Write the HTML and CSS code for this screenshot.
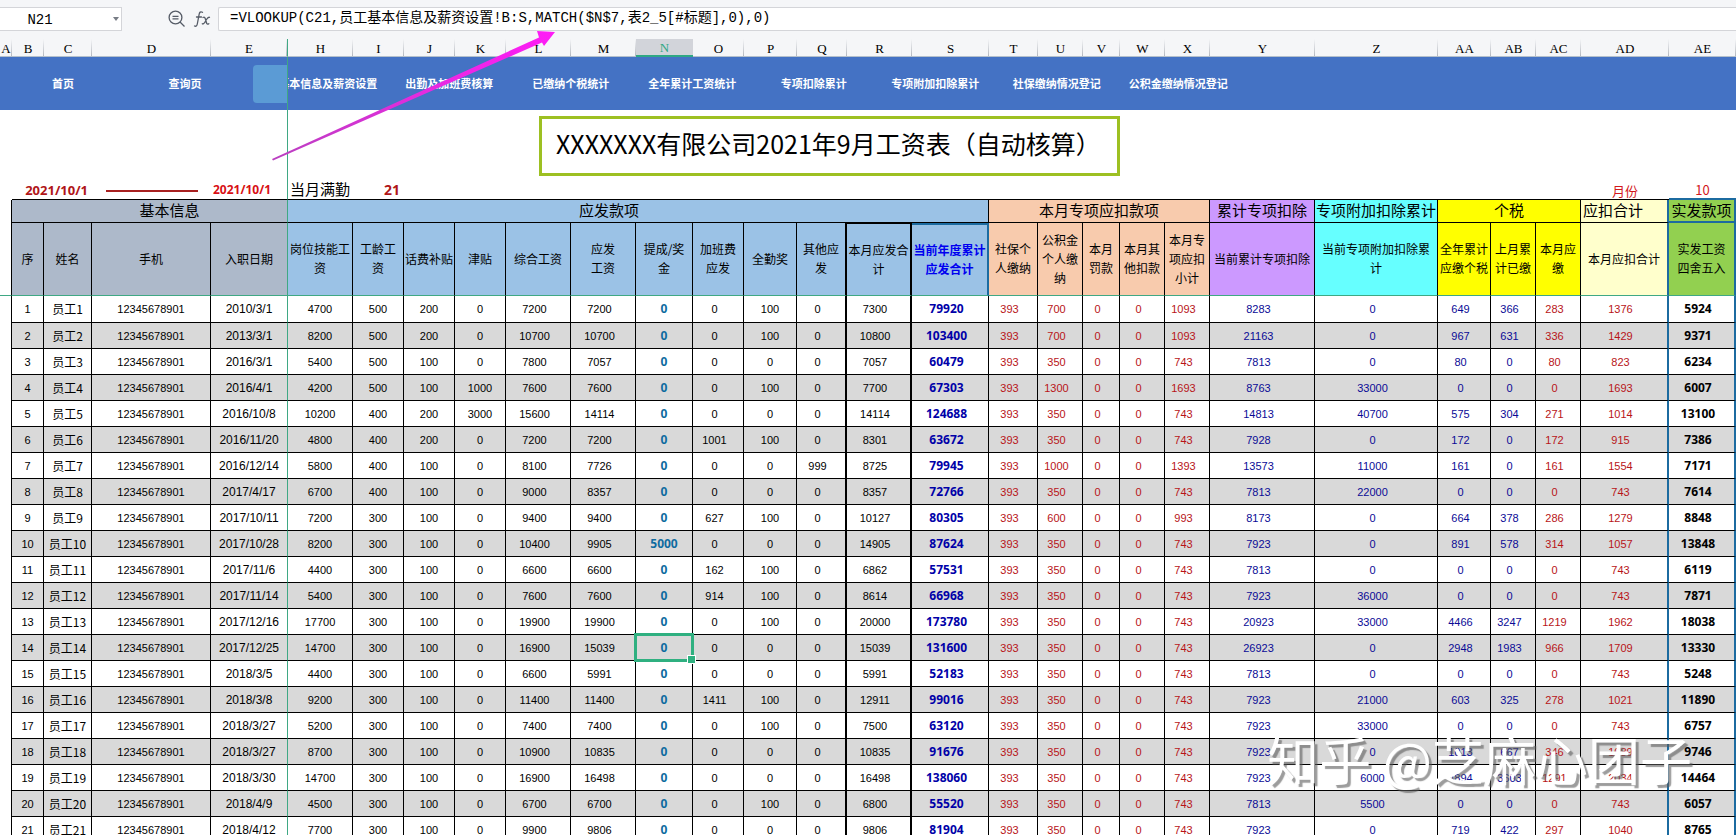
FILE: index.html
```html
<!DOCTYPE html>
<html lang="zh-CN">
<head>
<meta charset="utf-8">
<title>工资表</title>
<link rel="stylesheet" href="styles.css">
</head>
<body>
<header class="toolbar">
  <div class="namebox">
    <input class="namebox-input" aria-label="名称框" value="N21">
    <button class="namebox-drop" aria-label="展开名称列表"></button>
  </div>
  <div class="tools">
    <button class="tool" aria-label="查找">
      <svg width="18" height="18" viewBox="0 0 18 18" fill="none" stroke="#555b66" stroke-width="1.3"><circle cx="7.500" cy="7.500" r="6.400"/><path d="M4.500 6.300h6M4.500 8.800h6M12 12l4.500 4.500"/></svg>
    </button>
    <button class="tool" aria-label="插入函数">
      <svg width="18" height="18" viewBox="0 0 18 18" fill="none" stroke="#555b66" stroke-width="1.3" stroke-linecap="round"><path d="M9.5 2.3c-2-1.200-3 0-3.400 2.200L4.300 14c-.4 2-1.300 2.700-2.800 2M3.500 7h5M10 7.500c1.500-.8 2 0 2.400 1.500l1 3.500c.4 1.600 1.200 2 2.400 1.200M16.500 7.300c-1.200-.4-2 .5-3 2.200l-1.800 3c-.8 1.300-1.500 1.800-2.400 1.300"/></svg>
    </button>
  </div>
  <input class="formula" aria-label="编辑栏" value="=VLOOKUP(C21,员工基本信息及薪资设置!B:S,MATCH($N$7,表2_5[#标题],0),0)">
</header>
<main class="sheet">
  <table class="grid">
    <colgroup id="cols"></colgroup>
    <thead>
      <tr class="letters" id="letters"></tr>
      <tr class="nav-row">
        <td class="pane-edge" colspan="5">
          <nav class="nav nav-fixed"><a href="#">首页</a><a href="#">查询页</a><span class="nav-active"></span></nav>
        </td>
        <td colspan="24">
          <div class="nav-clip">
          <nav class="nav nav-scroll">
            <a href="#">基本信息及薪资设置</a><a href="#">出勤及加班费核算</a><a href="#">已缴纳个税统计</a><a href="#">全年累计工资统计</a><a href="#">专项扣除累计</a><a href="#">专项附加扣除累计</a><a href="#">社保缴纳情况登记</a><a href="#">公积金缴纳情况登记</a>
          </nav>
          </div>
        </td>
      </tr>
      <tr class="title-row">
        <td class="pane-edge" colspan="5"></td>
        <td colspan="24"><h1 class="title">XXXXXXX有限公司2021年9月工资表（自动核算）</h1></td>
      </tr>
      <tr class="info-row">
        <td class="blank"></td>
        <td class="date-from" colspan="2">2021/10/1</td>
        <td class="dash"><span class="dash-line"></span></td>
        <td class="date-to pane-edge">2021/10/1</td>
        <td class="full-label">当月满勤</td>
        <td class="full-days">21</td>
        <td colspan="20"></td>
        <td class="month">月份</td>
        <td class="month edge-blue">10</td>
      </tr>
      <tr class="group-row">
        <td class="gutter"></td>
        <th class="slate pane-edge group-basic" colspan="4">基本信息</th>
        <th class="sky group-pay" colspan="12">应发款项</th>
        <th class="peach" colspan="5">本月专项应扣款项</th>
        <th class="purple">累计专项扣除</th>
        <th class="cyan">专项附加扣除累计</th>
        <th class="yellow" colspan="3">个税</th>
        <th class="cream c-AD group-left">应扣合计</th>
        <th class="green c-AE">实发款项</th>
      </tr>
      <tr class="head-row">
        <td class="gutter"></td>
        <th class="slate">序</th><th class="slate">姓名</th><th class="slate">手机</th><th class="slate pane-edge">入职日期</th>
        <th class="sky">岗位技能工<br>资</th><th class="sky">工龄工<br>资</th><th class="sky">话费补贴</th><th class="sky">津贴</th><th class="sky">综合工资</th><th class="sky">应发<br>工资</th><th class="sky">提成/奖<br>金</th><th class="sky">加班费<br>应发</th><th class="sky">全勤奖</th><th class="sky c-Q">其他应<br>发</th><th class="sky c-R month-total">本月应发合<br>计</th><th class="sky year-total">当前年度累计<br>应发合计</th>
        <th class="peach">社保个<br>人缴纳</th><th class="peach">公积金<br>个人缴<br>纳</th><th class="peach">本月<br>罚款</th><th class="peach">本月其<br>他扣款</th><th class="peach">本月专<br>项应扣<br>小计</th>
        <th class="purple">当前累计专项扣除</th><th class="cyan">当前专项附加扣除累<br>计</th>
        <th class="yellow">全年累计<br>应缴个税</th><th class="yellow">上月累<br>计已缴</th><th class="yellow">本月应<br>缴</th>
        <th class="cream c-AD">本月应扣合计</th><th class="green c-AE">实发工资<br>四舍五入</th>
      </tr>
    </thead>
    <tbody id="rows"></tbody>
  </table>
</main>
<svg class="arrow" width="290" height="134" viewBox="0 0 290 134" aria-hidden="true">
  <defs><linearGradient id="ink" x1="0" y1="1" x2="1" y2="0"><stop offset="0" stop-color="#b93fc0"/><stop offset=".55" stop-color="#e62ae0"/><stop offset="1" stop-color="#ff1cf7"/></linearGradient></defs>
  <path fill="url(#ink)" d="M2 131L269 9.500L267 3L285 4L274 18L272 14.500L3 132.500Z"/>
</svg>
<div class="watermark">知乎 @芝麻心团子</div>
<script src="sheet.js"></script>
</body>
</html>
```
FILE: styles.css
```css
* { box-sizing: border-box; }

body {
  margin: 0;
  height: 100vh;
  overflow: hidden;
  position: relative;
  background: #fff;
  color: #000;
  font-family: "Liberation Sans", "Noto Sans CJK SC", sans-serif;
}

/* Toolbar */
.toolbar {
  display: flex;
  align-items: center;
  height: 39px;
  padding: 7px 0 8px;
  background: #f5f6f8;
}
.namebox {
  display: flex;
  align-items: center;
  width: 122px;
  height: 24px;
  background: #fff;
  border: 1px solid #d4d5d9;
  border-left: 0;
}
.namebox-input {
  width: 80px;
  min-width: 0;
  border: 0;
  padding: 2px 0 0;
  background: transparent;
  text-align: center;
  font: 14px "Liberation Mono", monospace;
  outline: 0;
}
.namebox-drop {
  margin-left: auto;
  margin-right: 2px;
  padding: 0;
  background: none;
  border: 3px solid transparent;
  border-top: 4px solid #777c85;
  border-bottom: 0;
}
.tools {
  display: flex;
  gap: 7px;
  padding: 0 7px 0 46px;
}
.tool {
  width: 18px;
  height: 18px;
  padding: 0;
  border: 0;
  background: none;
}
.formula {
  flex: 1;
  min-width: 0;
  height: 24px;
  border: 1px solid #d4d5d9;
  border-right: 0;
  border-radius: 2px 0 0 2px;
  padding: 0 0 6px 11px;
  background: #fff;
  font: 14px "Liberation Mono", "Noto Sans CJK SC", monospace;
  outline: 0;
}

/* Grid */
.grid {
  width: 100%;
  table-layout: fixed;
  border-collapse: separate;
  border-spacing: 0;
}
.grid th, .grid td {
  padding: 0;
  font-weight: 400;
  white-space: nowrap;
  text-align: center;
  vertical-align: middle;
}
.letters th {
  height: 18px;
  padding-top: 2px;
  line-height: 14px;
  background: linear-gradient(#f5f6f8, #b4b8bf) right / 1px 100% no-repeat #f5f6f8;
  border-bottom: 1px solid #b4c0cc;
  font-family: "Liberation Serif", serif;
  font-size: 13px;
}
.letters .picked {
  background: #d2d4da;
  border-bottom: 2px solid #2fa884;
  color: #2fa884;
}
.grid .pane-edge { border-right: 1px solid #3fa884; }

/* Navigation band */
.nav-row td { height: 53px; background: #4472c4; }
.nav { display: flex; align-items: center; height: 53px; }
.nav a {
  padding-bottom: 2px;
  color: #fff;
  font: bold 11px "Noto Sans CJK SC", sans-serif;
  text-decoration: none;
  text-align: center;
}
.nav-fixed { padding-left: 2px; }
.nav-fixed a { width: 122px; }
.nav-active {
  flex: 1;
  height: 38px;
  margin-left: 7px;
  border-radius: 4px 0 0 4px;
  background: #5b9bd5;
}
.nav-clip { overflow: hidden; }
.nav-scroll {
  display: grid;
  grid-template-columns: repeat(8, 1fr);
  width: 972px;
  margin-left: -21px;
}

/* Title and period */
.title-row td { height: 71px; }
.title {
  width: 581px;
  margin: 0 0 0 251px;
  padding: 0 0 6px 14px;
  border: 3px solid #9dc022;
  text-align: left;
  font: 25px/48px "Noto Sans CJK SC", sans-serif;
}
.info-row td {
  height: 19px;
  border-bottom: 1px solid #000;
  line-height: 18px;
}
.info-row .blank { border-bottom: 0; }
.info-row .date-from, .info-row .date-to, .info-row .full-days {
  color: #b01518;
  font: bold 12px/18px "Noto Sans", sans-serif;
}
.info-row .date-from { text-align: right; padding-right: 4px; font-size: 13px; }
.info-row .date-to { color: #d80f14; padding-right: 14px; }
.info-row .full-days { text-align: right; padding-right: 4px; font-size: 14px; }
.info-row .full-label { text-align: left; padding-left: 2px; font-size: 15px; }
.info-row .month { color: #d2181b; font: 13px/17px "Noto Sans CJK SC", sans-serif; }
.info-row .edge-blue { border-bottom: 2px solid #1c6ba0; }
.dash-line { display: inline-block; width: 92px; height: 2px; background: #a82020; vertical-align: middle; }

/* Headings */
.group-row th, .group-row td { height: 23px; }
.head-row th, .head-row td { height: 73px; }
.group-row th, .head-row th {
  border-right: 1px solid #000;
  border-bottom: 1px solid #000;
  font-family: "Noto Sans CJK SC", sans-serif;
}
.group-row th { font-size: 15px; line-height: 18px; padding-bottom: 2px; }
.group-row .group-basic { padding-left: 40px; }
.group-row .group-pay { padding-right: 58px; }
.group-row .group-left { text-align: left; padding-left: 2px; }
.head-row th { font-size: 12px; line-height: 19px; padding-bottom: 2px; }
.head-row th, .head-row td { border-bottom: 1px solid #3fa884; }
.slate { background: #adb9ca; }
.sky { background: #9bc2e6; }
.peach { background: #f8cbad; }
.purple { background: #cc99ff; }
.cyan { background: #66ffff; }
.yellow { background: #ffff00; }
.cream { background: #ffffcc; }
.green { background: #92d050; }
.grid .gutter { border-right: 1px solid #000; }
.head-row .month-total { border-top: 1px solid #000; }
.head-row .year-total {
  border-top: 2px solid #1c6ba0;
  border-right: 2px solid #1c6ba0;
  color: #0000f0;
  font-weight: 700;
}
.grid .c-Q, .grid .c-R { border-right: 2px solid #000; }
.grid .c-AD, .grid .c-AE { border-right: 2px solid #1c6ba0; }
.group-row .c-AE { border-bottom: 2px solid #1c6ba0; }

/* Body rows */
.row td {
  height: 26px;
  border-right: 1px solid #000;
  border-bottom: 1px solid #000;
  font-size: 11px;
  line-height: 16px;
}
.row:first-child td { height: 27px; }
.row td.gutter { border-bottom: 0; }
.row:nth-child(even) td:not(.gutter) { background: #d9d9d9; }
.row .c-C { font: 12px/16px "Noto Sans CJK SC", sans-serif; }
.row .c-E { font-size: 12px; border-right-color: #3fa884; }
.row .padded { padding-right: 7px; }
.row .c-N, .row .c-S, .row .c-AE { font: bold 12px/16px "Noto Sans", sans-serif; }
.row .c-N { color: #0f6ba0; }
.row .c-S { color: #0000a8; }
.row .red { color: #b81418; }
.row .navy { color: #0a0a96; }
.row .selected { position: relative; }
.selected::before {
  content: "";
  position: absolute;
  inset: -2px;
  border: 3px solid #2fb080;
  z-index: 1;
}
.selected::after {
  content: "";
  position: absolute;
  right: -4px;
  bottom: -4px;
  width: 7px;
  height: 7px;
  background: #2fb080;
  border: 1px solid #fff;
  z-index: 2;
}

/* Overlays */
.arrow { position: absolute; left: 270px; top: 28px; pointer-events: none; }
.watermark {
  position: absolute;
  right: 44px;
  bottom: 48px;
  color: #fff;
  font: 52px/56px "Noto Sans CJK SC", sans-serif;
  text-shadow: 3px 3px 1px rgba(90, 90, 90, .6);
  white-space: nowrap;
  pointer-events: none;
  z-index: 3;
}
```
FILE: sheet.js
```js
const columns = [
  ["A", 12], ["B", 32], ["C", 48], ["D", 119], ["E", 77], ["H", 65], ["I", 51], ["J", 51],
  ["K", 51], ["L", 65], ["M", 65], ["N", 57], ["O", 51], ["P", 53], ["Q", 50], ["R", 65],
  ["S", 77], ["T", 49], ["U", 45], ["V", 37], ["W", 45], ["X", 45], ["Y", 105], ["Z", 123],
  ["AA", 53], ["AB", 45], ["AC", 45], ["AD", 88], ["AE", 67]
];
const padded = new Set(["L", "M", "O", "Q", "R", "S", "T", "U", "V", "W", "X", "Y", "Z", "AA", "AB", "AC", "AD", "AE"]);
const red = new Set(["T", "U", "V", "W", "X", "AC", "AD"]);
const navy = new Set(["Y", "Z", "AA", "AB"]);

// Hire date, then the values of columns H to AE.
const staff = [
  "2010/3/1 4700 500 200 0 7200 7200 0 0 100 0 7300 79920 393 700 0 0 1093 8283 0 649 366 283 1376 5924",
  "2013/3/1 8200 500 200 0 10700 10700 0 0 100 0 10800 103400 393 700 0 0 1093 21163 0 967 631 336 1429 9371",
  "2016/3/1 5400 500 100 0 7800 7057 0 0 0 0 7057 60479 393 350 0 0 743 7813 0 80 0 80 823 6234",
  "2016/4/1 4200 500 100 1000 7600 7600 0 0 100 0 7700 67303 393 1300 0 0 1693 8763 33000 0 0 0 1693 6007",
  "2016/10/8 10200 400 200 3000 15600 14114 0 0 0 0 14114 124688 393 350 0 0 743 14813 40700 575 304 271 1014 13100",
  "2016/11/20 4800 400 200 0 7200 7200 0 1001 100 0 8301 63672 393 350 0 0 743 7928 0 172 0 172 915 7386",
  "2016/12/14 5800 400 100 0 8100 7726 0 0 0 999 8725 79945 393 1000 0 0 1393 13573 11000 161 0 161 1554 7171",
  "2017/4/17 6700 400 100 0 9000 8357 0 0 0 0 8357 72766 393 350 0 0 743 7813 22000 0 0 0 743 7614",
  "2017/10/11 7200 300 100 0 9400 9400 0 627 100 0 10127 80305 393 600 0 0 993 8173 0 664 378 286 1279 8848",
  "2017/10/28 8200 300 100 0 10400 9905 5000 0 0 0 14905 87624 393 350 0 0 743 7923 0 891 578 314 1057 13848",
  "2017/11/6 4400 300 100 0 6600 6600 0 162 100 0 6862 57531 393 350 0 0 743 7813 0 0 0 0 743 6119",
  "2017/11/14 5400 300 100 0 7600 7600 0 914 100 0 8614 66968 393 350 0 0 743 7923 36000 0 0 0 743 7871",
  "2017/12/16 17700 300 100 0 19900 19900 0 0 100 0 20000 173780 393 350 0 0 743 20923 33000 4466 3247 1219 1962 18038",
  "2017/12/25 14700 300 100 0 16900 15039 0 0 0 0 15039 131600 393 350 0 0 743 26923 0 2948 1983 966 1709 13330",
  "2018/3/5 4400 300 100 0 6600 5991 0 0 0 0 5991 52183 393 350 0 0 743 7813 0 0 0 0 743 5248",
  "2018/3/8 9200 300 100 0 11400 11400 0 1411 100 0 12911 99016 393 350 0 0 743 7923 21000 603 325 278 1021 11890",
  "2018/3/27 5200 300 100 0 7400 7400 0 0 100 0 7500 63120 393 350 0 0 743 7923 33000 0 0 0 743 6757",
  "2018/3/27 8700 300 100 0 10900 10835 0 0 0 0 10835 91676 393 350 0 0 743 7923 0 1013 667 346 1089 9746",
  "2018/3/30 14700 300 100 0 16900 16498 0 0 0 0 16498 138060 393 350 0 0 743 7923 6000 4894 3603 1291 2034 14464",
  "2018/4/9 4500 300 100 0 6700 6700 0 0 100 0 6800 55520 393 350 0 0 743 7813 5500 0 0 0 743 6057",
  "2018/4/12 7700 300 100 0 9900 9806 0 0 0 0 9806 81904 393 350 0 0 743 7923 0 719 422 297 1040 8765"
];

document.getElementById("cols").innerHTML =
  columns.map(([, width]) => `<col style="width:${width}px">`).join("");
document.getElementById("letters").innerHTML = columns.map(([name]) =>
  `<th class="${name === "N" ? "picked" : name === "E" ? "pane-edge" : ""}">${name}</th>`).join("");

document.getElementById("rows").innerHTML = staff.map((line, i) => {
  const values = [i + 1, "员工" + (i + 1), "12345678901", ...line.split(" ")];
  const cells = columns.slice(1).map(([name], c) => {
    const classes = ["c-" + name];
    if (padded.has(name)) classes.push("padded");
    if (red.has(name)) classes.push("red");
    if (navy.has(name)) classes.push("navy");
    if (name === "N" && i === 13) classes.push("selected");
    return `<td class="${classes.join(" ")}">${values[c]}</td>`;
  });
  return `<tr class="row"><td class="gutter"></td>${cells.join("")}</tr>`;
}).join("");
```
